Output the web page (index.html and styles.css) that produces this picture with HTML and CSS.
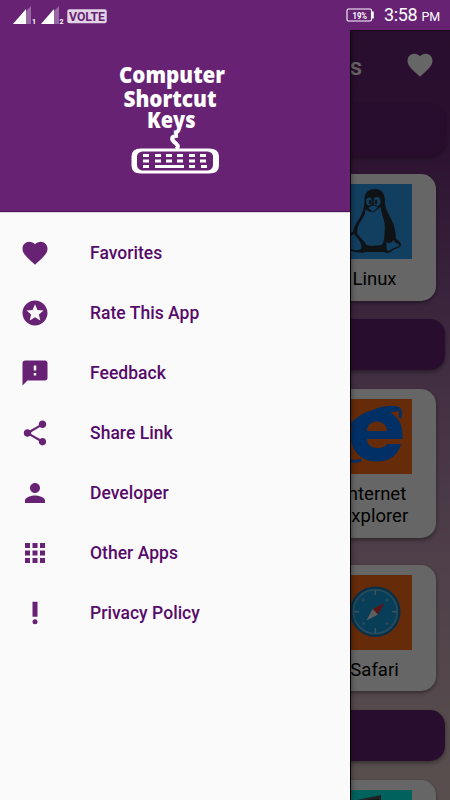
FILE: index.html
```html
<!DOCTYPE html>
<html lang="en">
<head>
<meta charset="utf-8">
<title>Computer Shortcut Keys</title>
<link rel="stylesheet" href="styles.css">
</head>
<body>
<div class="screen">
  <header class="status">
    <svg class="signals" viewBox="0 0 110 30">
      <path d="M13 24 31 6V24Z" fill="#9867a3"/><path d="M13 24 26 9V24Z" fill="#fff"/>
      <path d="M41 24 59 6V24Z" fill="#9867a3"/><path d="M41 24 54 9V24Z" fill="#fff"/>
      <text x="32" y="23.5" class="sim">1</text><text x="59.5" y="23.5" class="sim">2</text>
      <rect x="67.3" y="9.3" width="39.4" height="14" rx="2" fill="#e2d3e5"/>
      <text x="69" y="20.5" class="volte" textLength="36" lengthAdjust="spacingAndGlyphs">VOLTE</text>
    </svg>
    <svg class="battery" viewBox="0 0 30 30">
      <rect x="1" y="9" width="24.500" height="12" rx="1.500" fill="none" stroke="#fff" stroke-width="1.100"/>
      <path d="M26 11.500h1.800v7H26z" fill="#fff"/>
      <text x="6.500" y="18.500" class="percent" textLength="14.500" lengthAdjust="spacingAndGlyphs">19%</text>
    </svg>
    <span class="clock">3:58 <small>PM</small></span>
  </header>

  <main class="app">
    <div class="appbar">
      <h1>Computer Shortcut Keys</h1>
      <svg class="fav" viewBox="0 0 24 24"><path d="M12 21.35l-1.45-1.32C5.4 15.36 2 12.28 2 8.5 2 5.42 4.42 3 7.5 3c1.74 0 3.41.81 4.5 2.09C13.09 3.81 14.76 3 16.5 3 19.58 3 22 5.42 22 8.5c0 3.78-3.4 6.86-8.55 11.54z"/></svg>
    </div>
    <div class="section first"></div>
    <article class="card">
      <svg class="pic blue" viewBox="0 0 75 75">
        <path d="M27.500 17C27 9 31 5 38 5s10 5 10 13c0 12 11 17 11 37 3 2 5 3 5 6-2 4-6 3-9 6-3 2-6 3-8 1H28c-3 2-9 0-19-2V50l7-2C18 37 27 33 27.500 17Z" fill="#2a3138"/>
        <path d="M28.500 25c2 2 4 3 6 3s6-2 9-5c1 9 6 15 4 26 0 6-1 10-3 12-6 1-12 1-15 0-3-5-6-7-9-11-1-13 8-14 8-25Z" fill="#2d9bf0"/>
        <path d="M49.500 58c3 2 5 1 7-2 1 3 4 3 6 5-2 3-6 2-9 5-2 1-4 1-4-1Z" fill="#2d9bf0"/>
        <path d="M10 53c3 0 5-2 7-3 3 4 9 9 7 15-5 3-8 0-14-1Z" fill="#2d9bf0"/>
        <g fill="#2d9bf0"><ellipse cx="32" cy="17.500" rx="2.800" ry="4"/><ellipse cx="40" cy="17.500" rx="3.500" ry="4.500"/><path d="M30.500 24q5-5 11-1-4 5-6 5Z" stroke="#2a3138"/></g>
        <g fill="#2a3138"><ellipse cx="33" cy="18" rx="1.200" ry="2.200"/><ellipse cx="39" cy="18" rx="1.300" ry="2.400"/></g>
      </svg>
      <p>Linux</p>
    </article>
    <div class="section mid"></div>
    <article class="card">
      <svg class="pic orange" viewBox="0 0 75 75">
        <path fill="#0078ff" fill-rule="evenodd" d="M65.500 40H30c0 6 5 9 10 9s8-1 10-4h14C61 57 52 62.500 40 62.500 24 62.500 14 52 14 37 14 21 26 11 41 11c15 0 26 10 24.500 29ZM30 32h20c0-6-5-9.500-10-9.500S30 26 30 32Z"/>
        <path fill="none" stroke="#0078ff" stroke-width="3" d="M33 14C45 7 60 7 63 11c1 3 1 5 0 8M24 61C13 65 7 60 12 47M13 28C17 22 22 18 32 14"/>
        <path d="M38 12C48 7 61 8 62 12L50 14Z" fill="#0078ff"/>
      </svg>
      <p>Internet<br>Explorer</p>
    </article>
    <article class="card next">
      <svg class="pic orange" viewBox="0 0 75 75">
        <circle cx="38.300" cy="36.700" r="25.300" fill="#1678b5"/>
        <circle cx="38.300" cy="36.700" r="22" fill="#149cda" stroke="#60bce5" stroke-width="1.800"/>
        <path d="M38.300 15v5M38.300 53v5M17 36.700h5M55 36.700h5" stroke="#8bd3ee" stroke-width="1.500"/>
        <g fill="#60bce5"><circle cx="26.500" cy="25" r="1.500"/><circle cx="50" cy="25" r="1.500"/><circle cx="50" cy="48.500" r="1.500"/><circle cx="26.500" cy="48.500" r="1.500"/></g>
        <path d="M47.300 28.200 35.500 34 41 39.500Z" fill="#e9343b"/><path d="M29.500 45.500 35.500 34 41 39.500Z" fill="#eee"/>
      </svg>
      <p>Safari</p>
    </article>
    <div class="section last"></div>
    <article class="card">
      <svg class="pic teal" viewBox="0 0 75 75"><path d="M0 14 44 5V75H0Z" fill="#55565c"/><path d="M0 16 42 8V75H0Z" fill="#3a3b40"/></svg>
    </article>
    <div class="scrim"></div>
  </main>

  <aside class="drawer">
    <div class="brand">
      <svg viewBox="0 0 350 181">
        <g class="logo">
          <text x="119" y="52.500" textLength="106" lengthAdjust="spacingAndGlyphs">Computer</text>
          <text x="123.500" y="77" textLength="93" lengthAdjust="spacingAndGlyphs">Shortcut</text>
          <text x="147" y="98" textLength="48.500" lengthAdjust="spacingAndGlyphs">Keys</text>
        </g>
        <path d="M178 105.500c-9 1-6 5-2 8 3 3 2 4 0 5.500" fill="none" stroke="#fff" stroke-width="4"/>
        <path fill="#fff" fill-rule="evenodd" d="M141 118.500h68q10 0 10 8v9q0 8-10 8h-68q-9.500 0-9.500-8v-9q0-8 9.500-8ZM142 121.500q-5 1-5 5v8q0 5 5 6h66q5-1 5-6v-8q0-4-5-5Z"/>
        <path stroke="#fff" stroke-width="2.800" fill="none" d="M143 125.500h6m6 0h6m5 0h6m5 0h6m6 0h6m5 0h6M143 131h6m6 0h6m5 0h6m5 0h6m6 0h6m5 0h6M143 136.500h6m6 0h29m5 0h6m6 0h6"/>
      </svg>
    </div>
    <nav class="menu">
      <a><svg viewBox="0 0 24 24"><path d="M12 21.35l-1.45-1.32C5.4 15.36 2 12.28 2 8.5 2 5.42 4.42 3 7.5 3c1.74 0 3.41.81 4.5 2.09C13.09 3.81 14.76 3 16.5 3 19.58 3 22 5.42 22 8.5c0 3.78-3.4 6.86-8.55 11.54z"/></svg><span>Favorites</span></a>
      <a><svg viewBox="0 0 24 24"><path d="M11.99 2C6.47 2 2 6.48 2 12s4.47 10 9.990 10C17.520 22 22 17.520 22 12S17.520 2 11.990 2zm4.240 16L12 15.450 7.770 18l1.120-4.810-3.730-3.230 4.920-.42L12 5l1.920 4.530 4.920.42-3.730 3.230L16.230 18z"/></svg><span>Rate This App</span></a>
      <a><svg viewBox="0 0 24 24"><path d="M20 2H4c-1.100 0-1.990.9-1.990 2L2 22l4-4h14c1.100 0 2-.9 2-2V4c0-1.100-.9-2-2-2zm-7 12h-2v-2h2v2zm0-4h-2V6h2v4z"/></svg><span>Feedback</span></a>
      <a><svg viewBox="0 0 24 24"><path d="M18 16.080c-.76 0-1.440.3-1.960.77L8.910 12.700c.05-.23.09-.46.09-.7s-.04-.47-.09-.7l7.050-4.110c.54.5 1.250.81 2.040.81 1.660 0 3-1.340 3-3s-1.340-3-3-3-3 1.340-3 3c0 .24.04.47.09.7L8.040 9.810C7.500 9.310 6.790 9 6 9c-1.660 0-3 1.340-3 3s1.340 3 3 3c.79 0 1.500-.31 2.040-.81l7.120 4.160c-.05.21-.08.43-.08.65 0 1.610 1.310 2.920 2.920 2.920s2.920-1.310 2.920-2.920-1.310-2.920-2.920-2.920z"/></svg><span>Share Link</span></a>
      <a><svg viewBox="0 0 24 24"><path d="M12 12c2.210 0 4-1.790 4-4s-1.790-4-4-4-4 1.790-4 4 1.790 4 4 4zm0 2c-2.670 0-8 1.340-8 4v2h16v-2c0-2.660-5.330-4-8-4z"/></svg><span>Developer</span></a>
      <a><svg viewBox="0 0 24 24"><path d="M4 8h4V4H4v4zm6 12h4v-4h-4v4zm-6 0h4v-4H4v4zm0-6h4v-4H4v4zm6 0h4v-4h-4v4zm6-10v4h4V4h-4zm-6 4h4V4h-4v4zm6 6h4v-4h-4v4zm0 6h4v-4h-4v4z"/></svg><span>Other Apps</span></a>
      <a><svg viewBox="0 0 24 24"><path d="M10 3h4v12h-4z"/><circle cx="12" cy="19" r="2"/></svg><span>Privacy Policy</span></a>
    </nav>
  </aside>
</div>
</body>
</html>
```
FILE: styles.css
```css
* { box-sizing: border-box; }
body { margin: 0; font-family: Roboto, sans-serif; }
h1, p { margin: 0; }
svg { display: block; flex: none; }

.screen { position: relative; width: 450px; height: 800px; overflow: hidden; }

.status {
  position: relative; z-index: 1;
  display: flex; align-items: center; height: 30px;
  padding-right: 10px; background: #672274; color: #fff;
}
.signals { width: 110px; height: 30px; }
.sim { font: 700 7px Roboto, sans-serif; fill: #fff; }
.volte { font: 700 12px Roboto, sans-serif; fill: #672274; }
.battery { width: 30px; height: 30px; margin-left: auto; }
.percent { font: 700 9px Roboto, sans-serif; fill: #fff; }
.clock { margin-left: 8px; padding-top: 2px; font-size: 18px; line-height: 30px; letter-spacing: -.3px; white-space: nowrap; }
.clock small { font-size: 12.5px; letter-spacing: -.2px; }

.app {
  position: relative; display: flex; flex-direction: column; align-items: flex-end;
  height: 770px; overflow: hidden;
  background: linear-gradient(#672274 0, #6b2878 90px, #965f9b 285px, #a776a5 350px, #c39cb6 520px, #dcc4c3 750px);
}
.appbar {
  display: flex; justify-content: flex-end; align-items: center; gap: 43px;
  width: 450px; height: 74px; padding-right: 15px; flex: none;
}
.appbar h1 { color: #fff; font-size: 24px; font-weight: 500; line-height: 30px; white-space: nowrap; }
.fav { width: 30px; height: 30px; fill: #fff; margin-top: -4px; }

.section {
  flex: none; width: 440px; height: 51px; margin: 18px 5px 19px 0;
  border-radius: 15px; background: #672274; box-shadow: 0 2px 4px rgba(0, 0, 0, .4);
}
.section.first { height: 52px; margin: 0 5px 18px 0; }
.section.last { margin-top: 19px; }

.card {
  flex: none; width: 123px; margin-right: 14px; padding: 10px 0;
  display: flex; flex-direction: column; align-items: center;
  border-radius: 15px; background: #fff; box-shadow: 0 2px 4px rgba(0, 0, 0, .4);
}
.card.next { margin-top: 27px; }
.card p { padding-top: 9px; font-size: 18.5px; line-height: 22.5px; text-align: center; color: #000; }
.pic { width: 75px; height: 75px; }
.blue { background: #2d9bf0; }
.orange { background: #ff6b14; }
.teal { background: #00f4e8; }

.scrim {
  position: absolute; inset: 0; background: rgba(0, 0, 0, .6);
  box-shadow: inset 0 1px #180a1c;
}

.drawer {
  position: absolute; left: 0; top: 30px; width: 350px; height: 770px;
  background: #fafafa; box-shadow: 1px 0 #050205, 2px 0 5px rgba(0, 0, 0, .35);
}
.brand { height: 182px; background: #672274; border-bottom: 1px solid #4b125a; box-shadow: 0 1px #d9d9d9; }
.brand svg { width: 350px; height: 181px; }
.logo { font: 800 23px "Open Sans", sans-serif; fill: #fff; }

.menu { padding-top: 11px; }
.menu a { display: flex; align-items: center; height: 60px; padding-left: 20px; gap: 40px; }
.menu svg { width: 30px; height: 30px; fill: #672274; margin-top: -1px; }
.menu span { color: #560a69; font-size: 17.5px; font-weight: 500; line-height: 24px; letter-spacing: .03px; white-space: nowrap; }
```
